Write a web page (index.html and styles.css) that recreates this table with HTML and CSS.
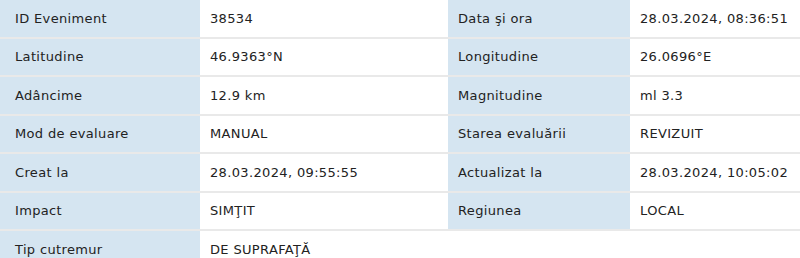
FILE: index.html
```html
<!DOCTYPE html>
<html lang="ro">
<head>
<meta charset="utf-8">
<title>Detalii eveniment</title>
<link rel="stylesheet" href="styles.css">
</head>
<body>
<div class="details">
  <div class="label first">ID Eveniment</div><div class="value">38534</div>
  <div class="label">Data şi ora</div><div class="value">28.03.2024, 08:36:51</div>

  <div class="label first">Latitudine</div><div class="value">46.9363°N</div>
  <div class="label">Longitudine</div><div class="value">26.0696°E</div>

  <div class="label first">Adâncime</div><div class="value">12.9 km</div>
  <div class="label">Magnitudine</div><div class="value">ml 3.3</div>

  <div class="label first">Mod de evaluare</div><div class="value">MANUAL</div>
  <div class="label">Starea evaluării</div><div class="value">REVIZUIT</div>

  <div class="label first">Creat la</div><div class="value">28.03.2024, 09:55:55</div>
  <div class="label">Actualizat la</div><div class="value">28.03.2024, 10:05:02</div>

  <div class="label first">Impact</div><div class="value">SIMŢIT</div>
  <div class="label">Regiunea</div><div class="value">LOCAL</div>

  <div class="label first">Tip cutremur</div><div class="value">DE SUPRAFAŢĂ</div>
</div>
</body>
</html>
```

FILE: styles.css
```css
html, body {
  margin: 0;
  padding: 0;
  background: #ffffff;
}

.details {
  display: grid;
  grid-template-columns: 200px 248px 182px 170px;
  grid-auto-rows: 38.5px;
  font-family: "DejaVu Sans", Verdana, sans-serif;
  font-size: 13px;
  letter-spacing: 0.35px;
  color: #222222;
}

.label,
.value {
  display: flex;
  align-items: center;
  padding: 0 10px;
  border-bottom: 2px solid #e9e9e9;
  white-space: nowrap;
  box-sizing: border-box;
}

.label {
  background: #d5e5f1;
}

.label.first {
  padding-left: 15px;
}

.value {
  background: #ffffff;
}
```
